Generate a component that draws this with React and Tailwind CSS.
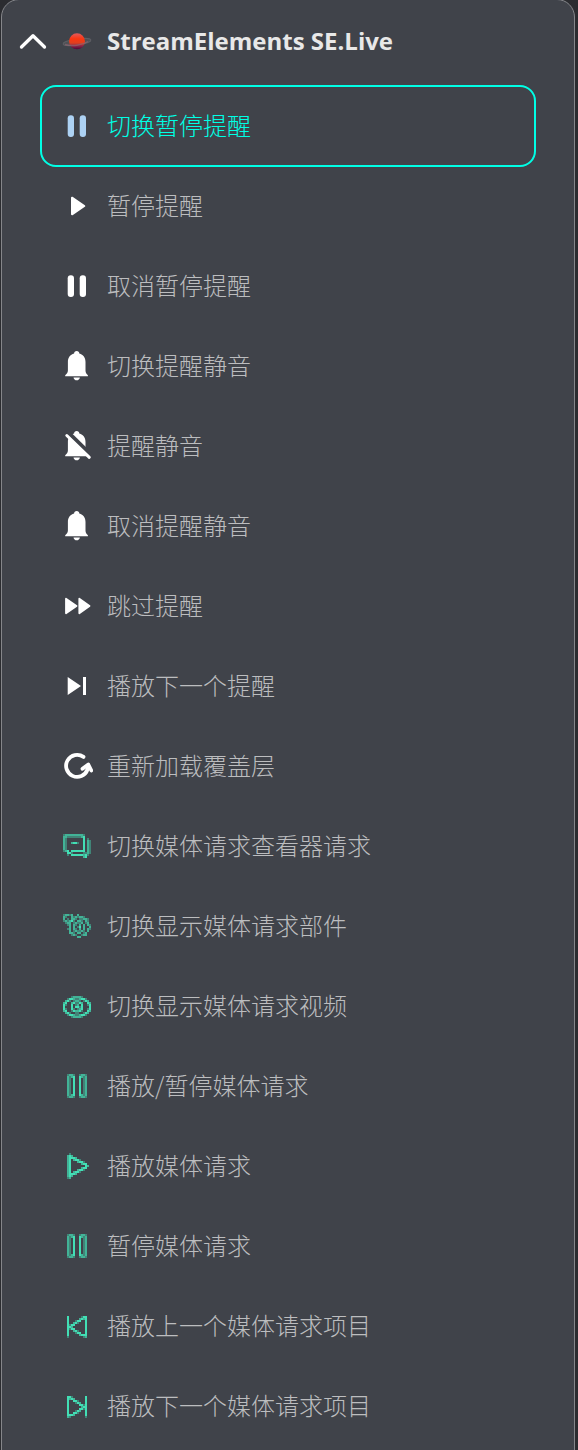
import { clsx } from "clsx";

// 2px cells: # full, + medium, - faint
const levels = { "#": 1, "+": 0.72, "-": 0.42 };

const pauseCells = [
  "-++-..-++-",
  "+-+#..#+-+",
  "+-.#..#.-+",
  "+-.#..#.-+",
  "+-.#..#.-+",
  "+-.#..#.-+",
  "+-.#..#.-+",
  "+-.#..#.-+",
  "+-.#..#.-+",
  "+-.#..#.-+",
  "+-+#..#+-+",
  "-++-..-++-",
];

const playCells = [
  ".-.........",
  "+#+........",
  "+###+......",
  "+#.+##-....",
  "+#...+##-..",
  "+#.....+##.",
  "+#.......#+",
  "+#.....+##.",
  "+#...+##-..",
  "+#.+##-....",
  "+###+......",
  "+#+........",
  "-+.........",
];

const nextCells = [
  "##-......#",
  "#+#+.....#",
  "#..##-...#",
  "#...-#+..#",
  "#.....##-#",
  "#......+##",
  "#.....##-#",
  "#...-#+..#",
  "#..##-...#",
  "###+.....#",
  "+-.......-",
];

const chatCells = [
  "-+++++++++-...",
  "++-------+#...",
  "+-........#.-.",
  "+-........#.+-",
  "+-..+##-..#.+-",
  "+-........#.+-",
  "+-........#.+-",
  "+-........#.+-",
  "-+#.#######.+-",
  "..##-.....--+-",
  "..-.######+#-.",
  "..........+#..",
];

const gearCells = [
  "-++-+..+......",
  "+-..+-+-++-...",
  "+.-.++-.--++-.",
  "-+-+#-.++-.+-.",
  ".-++.-+--+.-+.",
  "..-+.+-.+.+.+-",
  "...+.+.-#.+..+",
  "..-+.+-.+.+.+-",
  "...+.-+--+-.+.",
  "...++-.++.-+..",
  "....-+-..-++..",
  ".......++.....",
];

const eyeCells = [
  "....-++++-....",
  "..-##+--+##-..",
  ".+#-.-++-.-#+.",
  "+#..+#--#+..#+",
  "#-..#.-+.#..-#",
  "#...#.##-#...#",
  "#-..#-.-+#..-#",
  "+#..-#++#-..#+",
  ".+#-..--..-#+.",
  "..-##+--+##-..",
  "....-++++-....",
];

function PixelIcon({ cells, x, y, flip }) {
  return (
    <g fill="#42dfb5" transform={flip ? "translate(32 0) scale(-1 1)" : undefined} shapeRendering="crispEdges">
      {cells.flatMap((row, r) =>
        [...row].map((c, i) =>
          c === "." ? null : (
            <rect key={`${r}-${i}`} x={x + i * 2} y={y + r * 2} width="2" height="2" opacity={levels[c]} />
          )
        )
      )}
    </g>
  );
}

const bell = (
  <path d="M15.700 1c1.600 0 2.600 1 2.600 2.600 4 1.200 6.200 4.300 6.200 8.400v8.500c0 2.200 1 3.600 2.400 4.800v.9H4.200v-.9c1.400-1.200 2.700-2.600 2.700-4.800V12c0-4.100 2.200-7.200 6.200-8.400C13.100 2 14.100 1 15.700 1zM12.500 27.400h6.400c-.3 1.700-1.600 2.900-3.200 2.900s-2.900-1.200-3.200-2.900z" />
);

const pause = (
  <>
    <rect x="6.700" y="5.300" width="6.300" height="21.700" rx="3" />
    <rect x="18.700" y="5.300" width="6.300" height="21.700" rx="3" />
  </>
);

const icons = {
  pause,
  bell,
  play: <path d="M11 7.700 23.300 16 11 24.300z" stroke="currentColor" strokeWidth="2" strokeLinejoin="round" />,
  bellOff: (
    <>
      {bell}
      <path d="M4.500 .5 31 26.500" stroke="#40434a" strokeWidth="5" />
      <path d="M5.800 5.500 28.300 27.300" stroke="currentColor" strokeWidth="3" strokeLinecap="round" />
    </>
  ),
  forward: (
    <path
      d="M5 8.700 15.500 16 5 23.300zM18.300 8.700 28.500 16 18.300 23.300z"
      stroke="currentColor"
      strokeWidth="1.800"
      strokeLinejoin="round"
    />
  ),
  skip: <path d="M6.700 7v18l13.300-9zM22 7h3v18h-3z" />,
  reload: (
    <g fill="none" stroke="currentColor" strokeWidth="3.800" strokeLinecap="round" strokeLinejoin="round">
      <path d="M22.500 6.900A11 11 0 1 0 26.500 19.500L27 15.500" />
      <path d="M21.500 18.800 27.300 14.500 30.300 20.500" />
    </g>
  ),
  chat: <PixelIcon cells={chatCells} x={2} y={4} />,
  gears: <PixelIcon cells={gearCells} x={2} y={4} />,
  eye: <PixelIcon cells={eyeCells} x={2} y={6} />,
  pauseOutline: <PixelIcon cells={pauseCells} x={6} y={4} />,
  playOutline: <PixelIcon cells={playCells} x={6} y={3} />,
  prevOutline: <PixelIcon cells={nextCells} x={6} y={6} flip />,
  nextOutline: <PixelIcon cells={nextCells} x={6} y={6} />,
};

const actions = [
  { icon: "pause", label: "切换暂停提醒", active: true },
  { icon: "play", label: "暂停提醒" },
  { icon: "pause", label: "取消暂停提醒" },
  { icon: "bell", label: "切换提醒静音" },
  { icon: "bellOff", label: "提醒静音" },
  { icon: "bell", label: "取消提醒静音" },
  { icon: "forward", label: "跳过提醒" },
  { icon: "skip", label: "播放下一个提醒" },
  { icon: "reload", label: "重新加载覆盖层" },
  { icon: "chat", label: "切换媒体请求查看器请求" },
  { icon: "gears", label: "切换显示媒体请求部件" },
  { icon: "eye", label: "切换显示媒体请求视频" },
  { icon: "pauseOutline", label: "播放/暂停媒体请求" },
  { icon: "playOutline", label: "播放媒体请求" },
  { icon: "pauseOutline", label: "暂停媒体请求" },
  { icon: "prevOutline", label: "播放上一个媒体请求项目" },
  { icon: "nextOutline", label: "播放下一个媒体请求项目" },
];

function Planet() {
  return (
    <svg viewBox="0 0 32 32" className="size-8 shrink-0">
      <defs>
        <linearGradient id="planet" x1="0" y1="0" x2="0" y2="1">
          <stop offset="0" stopColor="#e05a5c" />
          <stop offset=".35" stopColor="#fb3510" />
          <stop offset=".6" stopColor="#e0401f" />
          <stop offset=".8" stopColor="#8a2448" />
          <stop offset="1" stopColor="#4c0638" />
        </linearGradient>
      </defs>
      <ellipse cx="16" cy="17" rx="14" ry="3" fill="#505156" stroke="#5e5f64" transform="rotate(-8 16 17)" />
      <circle cx="16" cy="16.300" r="8" fill="url(#planet)" />
      <path d="M4 19.500c7 2 17 1 23-3" fill="none" stroke="#8c6570" strokeWidth="1.500" opacity=".7" />
    </svg>
  );
}

export default function App() {
  return (
    <div className="h-[1450px] w-[578px] overflow-hidden bg-[#2b2c30] pl-px">
      <div className="-mt-px h-[1480px] w-[574px] rounded-[18px] border border-[#85868a] bg-[#40434a] pl-[38px] pr-[38px]">
        {/* Group header */}
        <div className="-ml-[21px] flex h-[86px] items-start pt-[25px]">
          <svg viewBox="0 0 28 32" className="mr-[14px] h-8 w-7 shrink-0" fill="none">
            <path d="M2.500 22 14 10.700 25.500 22" stroke="#fff" strokeWidth="3.300" strokeLinecap="round" strokeLinejoin="round" />
          </svg>
          <Planet />
          <h1 className="ml-[14px] whitespace-nowrap font-['Open_Sans','Noto_Sans',sans-serif] text-2xl font-bold leading-8 text-[#e8e8e8]">
            StreamElements SE.Live
          </h1>
        </div>

        {/* Actions */}
        <ul>
          {actions.map(({ icon, label, active }) => (
            <li
              key={label}
              className={clsx(
                "flex items-center border-2 pl-[19px] font-['Noto_Sans_CJK_SC',sans-serif] text-2xl font-light",
                active
                  ? "-my-px h-[82px] rounded-2xl border-[#00ffe5] text-[#00ffe5]"
                  : "h-20 border-transparent text-[#bcbdbf]"
              )}
            >
              <svg
                viewBox="0 0 32 32"
                className={clsx("mr-3.5 size-8 shrink-0", active ? "text-[#add2f4]" : "text-white")}
                fill="currentColor"
              >
                {icons[icon]}
              </svg>
              <span className="whitespace-nowrap pb-0.5">{label}</span>
            </li>
          ))}
        </ul>
      </div>
    </div>
  );
}
